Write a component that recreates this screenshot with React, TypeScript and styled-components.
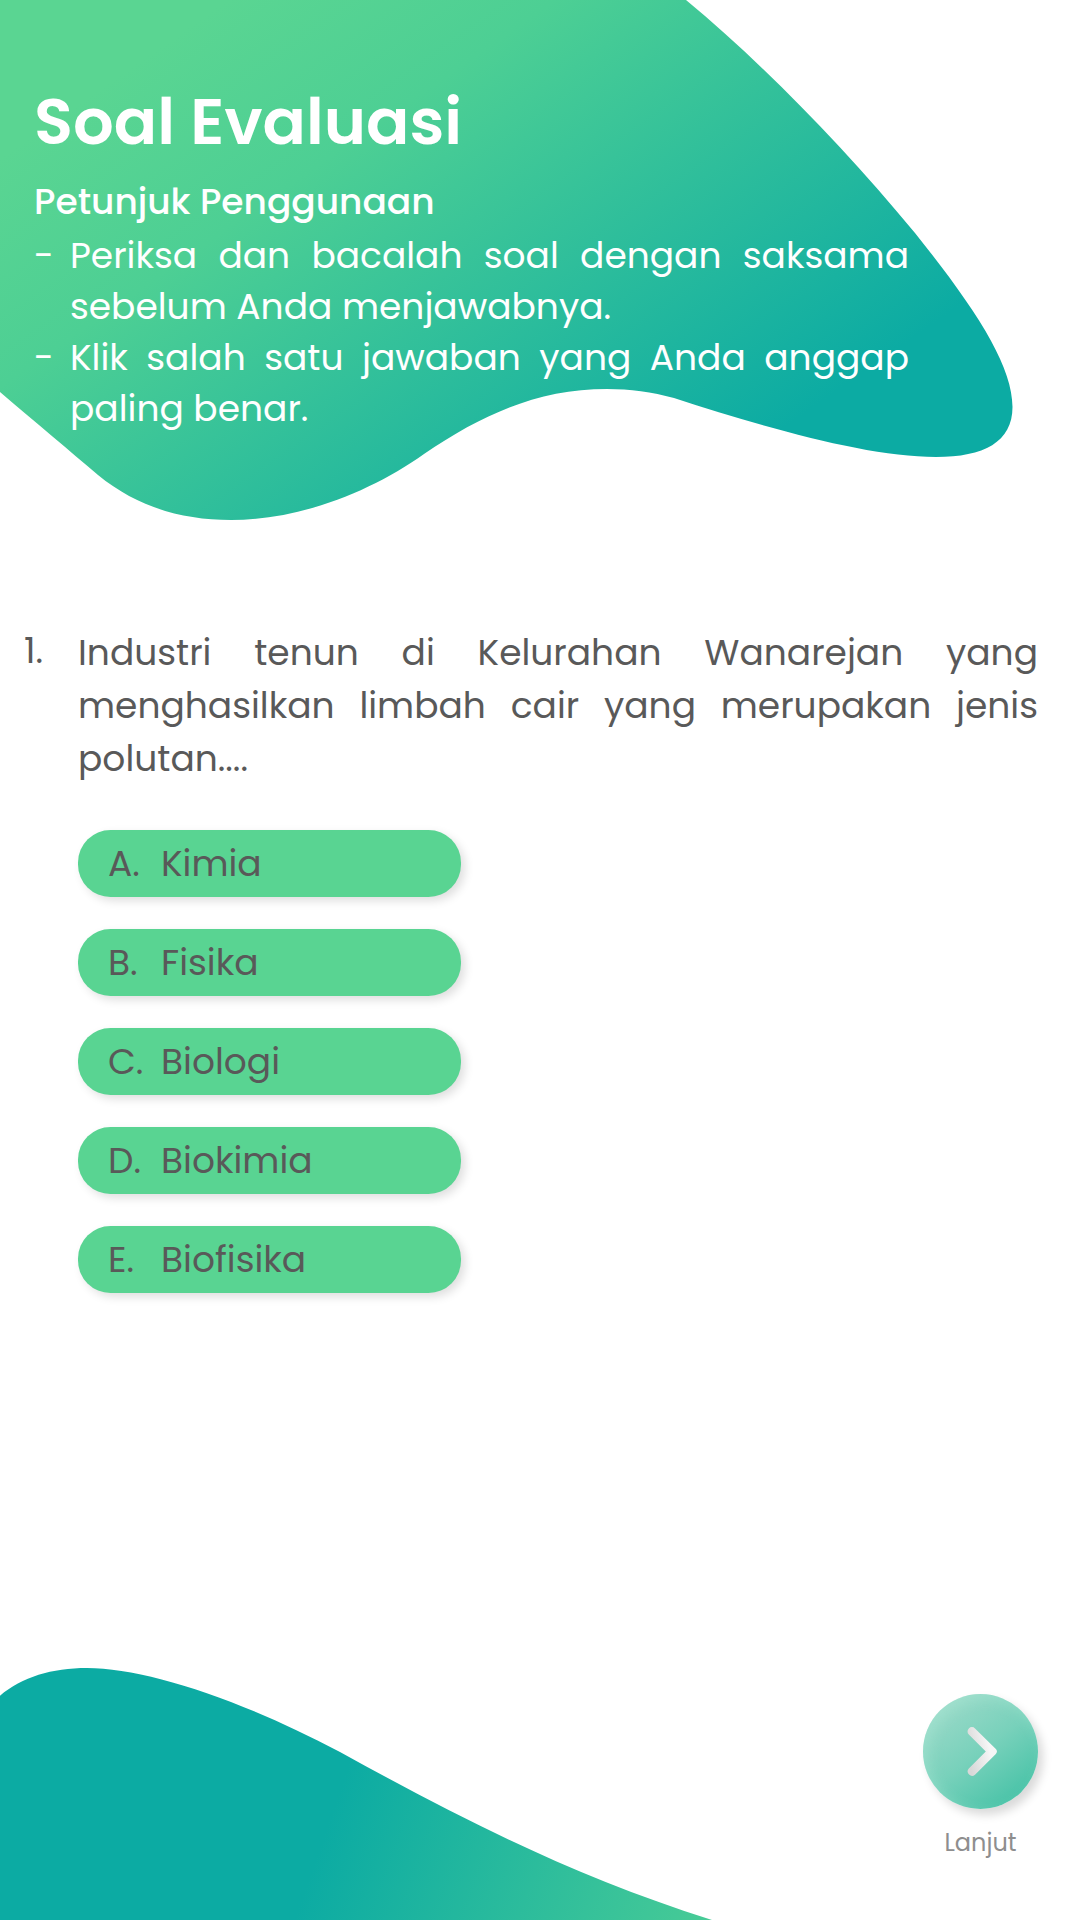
import React, { useState } from "react";
import styled, { createGlobalStyle } from "styled-components";

const GlobalStyle = createGlobalStyle`
  *, *::before, *::after { box-sizing: border-box; }
  body {
    margin: 0;
    background: #fff;
    font-family: Poppins, Inter, "Open Sans", sans-serif;
  }
`;

const Page = styled.main`
  position: relative;
  display: flex;
  flex-direction: column;
  width: 1080px;
  height: 1920px;
  overflow: hidden;
  background: #fff;
  color: #595959;
`;

const Backdrop = styled.svg`
  position: absolute;
  inset: 0;
  width: 1080px;
  height: 1920px;
  pointer-events: none;
`;

const Header = styled.header`
  position: relative;
  width: 911px;
  height: 600px;
  padding: 82px 2px 0 34px;
  color: #fff;
`;

const Title = styled.h1`
  margin: 0;
  font-size: 64px;
  line-height: 80px;
  font-weight: 600;
  white-space: nowrap;
`;

const Subtitle = styled.h2`
  margin: 15px 0 0;
  font-size: 36px;
  line-height: 50px;
  font-weight: 500;
`;

const Rules = styled.ul`
  margin: 3px 0 0;
  padding: 0;
  list-style: none;
  font-size: 36px;
  line-height: 51px;
`;

const Rule = styled.li`
  display: grid;
  grid-template-columns: 36px 1fr;
`;

const Line = styled.span<{ $justify?: boolean }>`
  display: block;
  white-space: nowrap;
  text-align: ${(p) => (p.$justify ? "justify" : "left")};
  text-align-last: ${(p) => (p.$justify ? "justify" : "left")};
`;

const Question = styled.section`
  position: relative;
  display: grid;
  grid-template-columns: 54px 960px;
  padding-left: 24px;
  margin-top: 26px;
  font-size: 36px;
  line-height: 53px;
`;

const QuestionNumber = styled.span`
  margin-top: -2px;
`;

const QuestionText = styled.p`
  margin: 0;
`;

const Options = styled.div`
  position: relative;
  display: flex;
  flex-direction: column;
  gap: 32px;
  width: 383px;
  margin: 45px 0 0 78px;
`;

const Option = styled.button<{ $active: boolean }>`
  display: grid;
  grid-template-columns: 53px 1fr;
  align-items: center;
  height: 67px;
  padding: 0 0 0 30px;
  border: 0;
  border-radius: 32.5px;
  background: ${(p) => (p.$active ? "#46c283" : "#59d492")};
  box-shadow: 4px 4px 10px rgba(0, 0, 0, 0.13);
  color: #595959;
  font: inherit;
  font-size: 36px;
  line-height: 53px;
  text-align: left;
  white-space: nowrap;
  cursor: pointer;
`;

const Footer = styled.footer`
  position: relative;
  display: flex;
  justify-content: flex-end;
  margin-top: auto;
  padding: 0 42px 59px 0;
`;

const NextButton = styled.button`
  display: flex;
  flex-direction: column;
  align-items: center;
  gap: 16px;
  width: 115px;
  padding: 0;
  border: 0;
  background: none;
  color: #8e8e8e;
  font: inherit;
  font-size: 24px;
  line-height: 36px;
  cursor: pointer;
`;

const NextDisc = styled.span`
  display: flex;
  width: 115px;
  height: 115px;
  border-radius: 50%;
  background: linear-gradient(143deg, #9cdac9 10%, #78d1bb 50%, #43c1a5 92%);
  box-shadow: 5px 6px 10px rgba(0, 0, 0, 0.15), inset 5px 5px 14px rgba(172, 234, 216, 0.4);
`;

const options = [
  { key: "A", text: "Kimia" },
  { key: "B", text: "Fisika" },
  { key: "C", text: "Biologi" },
  { key: "D", text: "Biokimia" },
  { key: "E", text: "Biofisika" },
];

function Waves() {
  return (
    <Backdrop viewBox="0 0 1080 1920" aria-hidden="true">
      <defs>
        <linearGradient id="waveTop" gradientUnits="userSpaceOnUse" x1="74" y1="107" x2="456" y2="656">
          <stop offset="0" stopColor="#5ad592" />
          <stop offset="0.28" stopColor="#4dcf94" />
          <stop offset="1" stopColor="#0caba3" />
        </linearGradient>
        <linearGradient id="waveBottom" gradientUnits="userSpaceOnUse" x1="312" y1="1870" x2="766" y2="2030">
          <stop offset="0" stopColor="#0caba3" />
          <stop offset="1" stopColor="#55d293" />
        </linearGradient>
      </defs>
      <path
        fill="url(#waveTop)"
        d="M0 0H686C762 63 843 146 915 233C975 308 1012.5 365 1012.5 407C1012.5 442 984 457 936 457C868 457 766 428 674 398C652 392 630 389 607 389C540 389 484 413 424 454C372 491 301 520 231 520C182 520 137 507 98 475C70 451 35 422 0 392Z"
      />
      <path
        fill="url(#waveBottom)"
        d="M0 1695.7C22 1677 52 1668 87 1668C145 1668 240 1699 340 1752C460 1818 570 1875 712 1920H0Z"
      />
    </Backdrop>
  );
}

function Chevron() {
  return (
    <svg width="115" height="115" viewBox="0 0 115 115" aria-hidden="true">
      <defs>
        <linearGradient id="chevron" gradientUnits="userSpaceOnUse" x1="45" y1="60" x2="74" y2="54">
          <stop offset="0" stopColor="#d8d8d8" />
          <stop offset="0.75" stopColor="#f6f6f6" />
        </linearGradient>
      </defs>
      <path
        d="M45.8 34.4a4.4 4.4 0 0 1 6.2 0L72.6 54.8a3.8 3.8 0 0 1 0 5.4L52 80.7a4.4 4.4 0 0 1-6.2-6.2L62.8 57.5 45.8 40.6a4.4 4.4 0 0 1 0-6.2Z"
        fill="url(#chevron)"
      />
    </svg>
  );
}

export default function App() {
  const [selected, setSelected] = useState<string | null>(null);
  return (
    <>
      <GlobalStyle />
      <Page>
        <Waves />
        <Header>
          <Title>Soal Evaluasi</Title>
          <Subtitle>Petunjuk Penggunaan</Subtitle>
          <Rules>
            <Rule>
              <span>-</span>
              <div>
                <Line $justify>Periksa dan bacalah soal dengan saksama</Line>
                <Line>sebelum Anda menjawabnya.</Line>
              </div>
            </Rule>
            <Rule>
              <span>-</span>
              <div>
                <Line $justify>Klik salah satu jawaban yang Anda anggap</Line>
                <Line>paling benar.</Line>
              </div>
            </Rule>
          </Rules>
        </Header>
        <Question>
          <QuestionNumber>1.</QuestionNumber>
          <QuestionText>
            <Line $justify>Industri tenun di Kelurahan Wanarejan yang</Line>
            <Line $justify>menghasilkan limbah cair yang merupakan jenis</Line>
            <Line>polutan....</Line>
          </QuestionText>
        </Question>
        <Options>
          {options.map((o) => (
            <Option key={o.key} $active={selected === o.key} onClick={() => setSelected(o.key)}>
              <span>{o.key}.</span>
              <span>{o.text}</span>
            </Option>
          ))}
        </Options>
        <Footer>
          <NextButton>
            <NextDisc>
              <Chevron />
            </NextDisc>
            Lanjut
          </NextButton>
        </Footer>
      </Page>
    </>
  );
}
